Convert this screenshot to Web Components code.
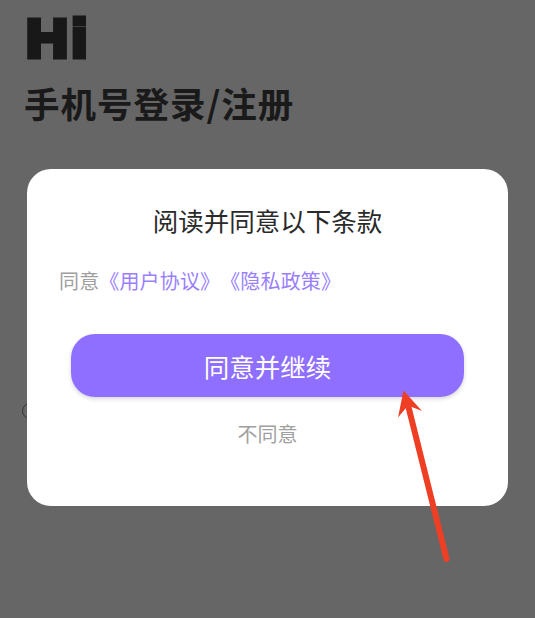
<!DOCTYPE html>
<html lang="zh">
<head>
<meta charset="utf-8">
<title>手机号登录/注册</title>
<style>
  html, body { margin: 0; height: 100%; }
  body { font-family: "Noto Sans CJK SC", "Liberation Sans", sans-serif; overflow: hidden; }
</style>
</head>
<body>
<login-screen>
  <consent-dialog title-text="阅读并同意以下条款">
    <terms-link slot="terms">《用户协议》</terms-link>
    <terms-link slot="terms">《隐私政策》</terms-link>
    <span slot="confirm">同意并继续</span>
    <span slot="decline">不同意</span>
  </consent-dialog>
  <pointer-arrow></pointer-arrow>
</login-screen>

<script>
const screenTemplate = document.createElement('template');
screenTemplate.innerHTML = /* html */ `
  <style>
    :host {
      display: block;
      position: relative;
      width: 535px;
      height: 618px;
      overflow: hidden;
      background: #fff;
      color: #424242;
    }
    .page {
      display: flex;
      flex-direction: column;
      padding: 9px 24px 0;
    }
    .hi {
      font: 700 54px/59.5px "Liberation Sans", sans-serif;
      -webkit-text-stroke: 5px #3c3c3c;
      color: #3c3c3c;
      letter-spacing: 3px;
      margin-left: 1.5px;
      transform: scaleX(1.08);
      transform-origin: left;
    }
    h1 {
      margin: 10.5px 0 0;
      font: 700 35.5px/48px "Noto Sans CJK SC", sans-serif;
      letter-spacing: 1px;
    }
    .radio {
      position: absolute;
      left: 22px;
      top: 403px;
      width: 16px;
      height: 16px;
      border: 1px solid #888;
      border-radius: 50%;
      box-sizing: border-box;
    }
    .scrim {
      position: absolute;
      inset: 0;
      background: rgba(0, 0, 0, 0.6);
    }
    .center {
      position: absolute;
      left: 27px;
      right: 27px;
      top: 169px;
    }
  </style>
  <div class="page">
    <div class="hi">Hi</div>
    <h1>手机号登录/注册</h1>
  </div>
  <div class="radio"></div>
  <div class="scrim"></div>
  <div class="center"><slot></slot></div>
  <slot name="overlay"></slot>
`;

class LoginScreen extends HTMLElement {
  constructor() {
    super();
    this.attachShadow({ mode: 'open' }).appendChild(screenTemplate.content.cloneNode(true));
  }
}

const dialogTemplate = document.createElement('template');
dialogTemplate.innerHTML = /* html */ `
  <style>
    :host {
      display: flex;
      flex-direction: column;
      height: 337px;
      box-sizing: border-box;
      padding: 34px 44px 0;
      background: #fff;
      border-radius: 24px;
    }
    h2 {
      margin: 0;
      text-align: center;
      font: 400 25.5px/34px "Noto Sans CJK SC", sans-serif;
      color: #2a2a2a;
    }
    .terms {
      margin: 29px 0 0 -12px;
      display: flex;
      font: 400 20px/30px "Noto Sans CJK SC", sans-serif;
      letter-spacing: 0.15px;
      color: #a0a0a0;
    }
    button {
      margin-top: 38px;
      height: 63px;
      border: 0;
      border-radius: 24px;
      background: #8f6fff;
      color: #fff;
      font: 400 25.5px/34px "Noto Sans CJK SC", sans-serif;
      box-shadow: 0 2px 4px rgba(0, 0, 0, 0.16);
      padding: 0;
    }
    .decline {
      margin-top: 22px;
      text-align: center;
      font: 400 20px/30px "Noto Sans CJK SC", sans-serif;
      color: #a0a0a0;
    }
  </style>
  <h2></h2>
  <div class="terms">同意<slot name="terms"></slot></div>
  <button><slot name="confirm"></slot></button>
  <div class="decline"><slot name="decline"></slot></div>
`;

class ConsentDialog extends HTMLElement {
  constructor() {
    super();
    this.attachShadow({ mode: 'open' }).appendChild(dialogTemplate.content.cloneNode(true));
  }

  connectedCallback() {
    this.shadowRoot.querySelector('h2').textContent = this.getAttribute('title-text');
  }
}

const linkTemplate = document.createElement('template');
linkTemplate.innerHTML = /* html */ `
  <style>
    :host { display: inline; color: #9a7fff; }
  </style>
  <slot></slot>
`;

class TermsLink extends HTMLElement {
  constructor() {
    super();
    this.attachShadow({ mode: 'open' }).appendChild(linkTemplate.content.cloneNode(true));
  }
}

const arrowTemplate = document.createElement('template');
arrowTemplate.innerHTML = /* html */ `
  <style>
    :host { display: block; position: absolute; left: 0; top: 0; pointer-events: none; }
    svg { display: block; }
  </style>
  <svg width="535" height="618" viewBox="0 0 535 618" fill="none">
    <path d="M446.5 559 L408 405" stroke="#ee3f24" stroke-width="6" stroke-linecap="round"/>
    <path d="M403.5 390.5 L422 411 L408 405.5 L398 417.5 Z" fill="#ee3f24"/>
  </svg>
`;

class PointerArrow extends HTMLElement {
  constructor() {
    super();
    this.attachShadow({ mode: 'open' }).appendChild(arrowTemplate.content.cloneNode(true));
  }

  connectedCallback() {
    this.slot = 'overlay';
  }
}

customElements.define('login-screen', LoginScreen);
customElements.define('consent-dialog', ConsentDialog);
customElements.define('terms-link', TermsLink);
customElements.define('pointer-arrow', PointerArrow);
</script>
</body>
</html>
